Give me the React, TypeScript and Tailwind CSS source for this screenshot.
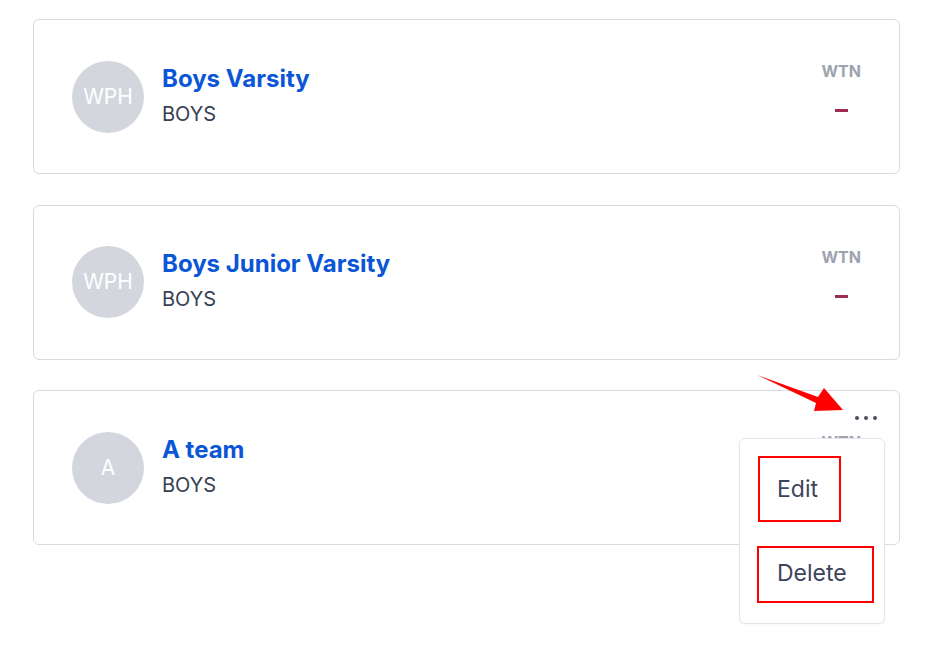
const teams = [
  { id: 1, initials: 'WPH', name: 'Boys Varsity', gender: 'BOYS' },
  { id: 2, initials: 'WPH', name: 'Boys Junior Varsity', gender: 'BOYS' },
  { id: 3, initials: 'A', name: 'A team', gender: 'BOYS', menuOpen: true },
];

type Team = (typeof teams)[number];

const TeamCard = ({ team }: { team: Team }) => {
  return (
    <div className="relative flex h-[155px] rounded-md border border-[#d9dbe0] bg-white pl-[38px] pr-[38px]">
      {/* Left: avatar + name */}
      <div className="flex flex-1 items-center">
        <div className="flex h-[72px] w-[72px] shrink-0 items-center justify-center rounded-full bg-[#d4d6dd] text-[21px] text-white">
          {team.initials}
        </div>
        <div className="mb-[3px] ml-[18px]">
          <div className="text-[24px] font-bold leading-[32px] text-[#0a56d6]">{team.name}</div>
          <div className="mt-[5px] text-[20px] leading-[28px] text-[#374151]">{team.gender}</div>
        </div>
      </div>

      {/* Right: ranking */}
      <div className="flex flex-col items-center self-start pt-[39px]">
        <div className="text-[16px] font-bold leading-[24px] text-[#9ca3af]">WTN</div>
        <div className="mt-[26px] h-[3px] w-[13px] bg-[#9e2c4e]"></div>
      </div>

      {team.menuOpen && (
        <>
          <div className="absolute right-[22px] top-[25px] flex gap-[5px]">
            <span className="h-[4px] w-[4px] rounded-full bg-[#4b5060]"></span>
            <span className="h-[4px] w-[4px] rounded-full bg-[#4b5060]"></span>
            <span className="h-[4px] w-[4px] rounded-full bg-[#4b5060]"></span>
          </div>
          <div className="absolute right-[14px] top-[47px] z-10 flex w-[146px] flex-col items-start rounded-md border border-[#e3e5ea] bg-white pb-[20px] shadow-[0_1px_3px_rgba(0,0,0,0.04)]">
            <div className="ml-[18px] mt-[17px] flex h-[66px] w-[83px] items-center border-2 border-[#ff0000] pl-[17px] text-[23px] text-[#3d4459]">
              Edit
            </div>
            <div className="ml-[17px] mt-[24px] flex h-[57px] w-[117px] items-center border-2 border-[#ff0000] pb-[3px] pl-[18px] text-[23px] text-[#3d4459]">
              Delete
            </div>
          </div>
        </>
      )}
    </div>
  );
};

export default function App() {
  return (
    <div className="relative h-[664px] w-[930px] overflow-hidden bg-white font-['Inter',sans-serif]">
      <div className="ml-[33px] flex w-[867px] flex-col gap-[30.5px] pt-[19px]">
        {teams.map((team) => (
          <TeamCard key={team.id} team={team} />
        ))}
      </div>

      {/* Annotation arrow */}
      <svg className="pointer-events-none absolute left-0 top-0 z-20" width="930" height="664" viewBox="0 0 930 664">
        <polygon points="757,375 818,397 824,388 843,410 814,411 816,403" fill="#ff0000" />
      </svg>
    </div>
  );
}
